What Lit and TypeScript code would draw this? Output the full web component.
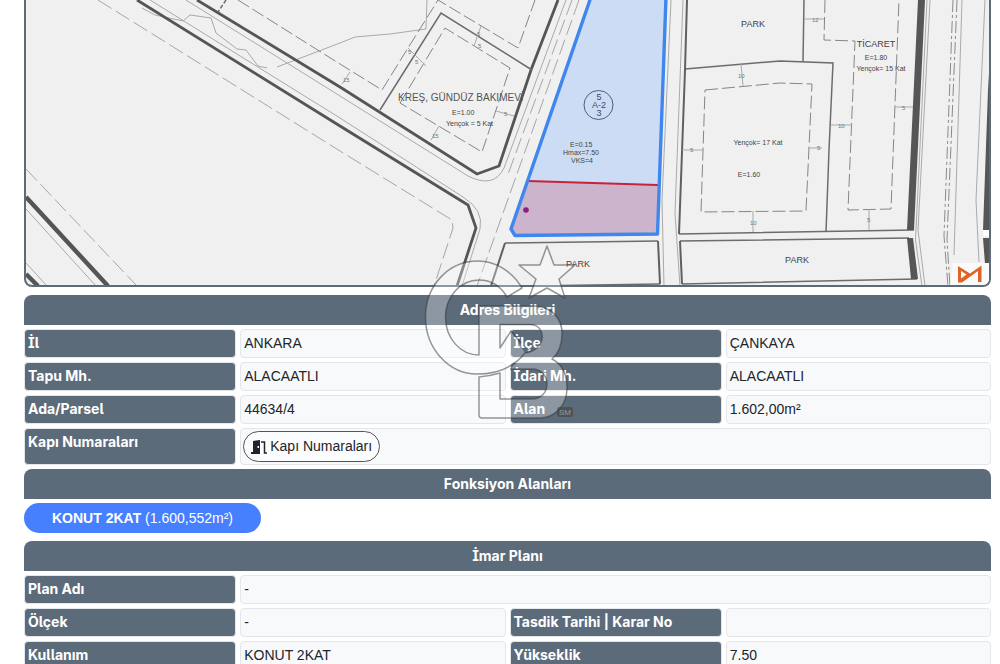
import { LitElement, html, svg, css } from "lit";
import { customElement, property } from "lit/decorators.js";

interface Field {
  label: string;
  value: string;
  wide?: boolean;
  door?: boolean;
}

const address: Field[] = [
  { label: "İl", value: "ANKARA" },
  { label: "İlçe", value: "ÇANKAYA" },
  { label: "Tapu Mh.", value: "ALACAATLI" },
  { label: "İdari Mh.", value: "ALACAATLI" },
  { label: "Ada/Parsel", value: "44634/4" },
  { label: "Alan", value: "1.602,00m²" },
  { label: "Kapı Numaraları", value: "", wide: true, door: true },
];

const plan: Field[] = [
  { label: "Plan Adı", value: "-", wide: true },
  { label: "Ölçek", value: "-" },
  { label: "Tasdik Tarihi | Karar No", value: "" },
  { label: "Kullanım", value: "KONUT 2KAT" },
  { label: "Yükseklik", value: "7.50" },
];

@customElement("parcel-map")
export class ParcelMap extends LitElement {
  static styles = css`
    :host {
      display: block;
      border: 2px solid #5c6b7a;
      border-top: 0;
      border-radius: 0 0 8px 8px;
      overflow: hidden;
      background: #f0f0f0;
    }
    svg {
      display: block;
      width: 100%;
      height: auto;
      font-family: "Liberation Sans", Arial, sans-serif;
    }
    .line { fill: none; stroke: #a9a9a9; stroke-width: 1; }
    .edge { fill: none; stroke: #6c6c6c; stroke-width: 1.5; }
    .thick { fill: none; stroke: #555; stroke-width: 2.8; }
    .wall { fill: none; stroke: #606060; stroke-width: 2; }
    .heavy { fill: none; stroke: #555; stroke-width: 4.4; }
    .dash { fill: none; stroke: #a6a6a6; stroke-width: 1; stroke-dasharray: 16 5; }
    .setback { fill: none; stroke: #858585; stroke-width: 1; stroke-dasharray: 13 4; }
    .lane { fill: none; stroke: #8a8a8a; stroke-width: 1; stroke-dasharray: 12 3 3 3; }
    .solid { fill: #565656; }
    .title { font-size: 10px; fill: #555; }
    .name { font-size: 9px; fill: #444; }
    .note { font-size: 7px; fill: #444; }
    .mark { font-size: 9px; fill: #3c4a60; }
    .dim { font-size: 6px; fill: #777; }
  `;

  render() {
    return html`
      <svg viewBox="26 0 963 285" role="img" aria-label="İmar planı haritası">
        ${svg`
        <path class="dash" d="M98 0L340 151L452 220L453 228L434 286M26 169L137 286"/>
        <path class="line" d="M150 0L340 118L463 197Q484 210 480 229L462 286"/>
        <path class="line" d="M186 0L340 96L468 176Q494 189 504 168L563 8L566 0"/>
        <path class="dash" d="M579 0L477 286M572 0L507 177"/>
        <path class="line" d="M142 8L155 15L183 21L190 15L211 18L216 33L237 49L246 50L258 66L267 68M277 67L340 43L355 37L390 34L426 29L427 0"/>
        <path class="line" d="M26 209L96 286M26 263L47 286"/>
        <path class="thick" d="M137 0L340 126L468 205L476 228L457 286"/>
        <path class="thick" d="M197 0L340 87L477 174L499 166L531 70L558 0"/>
        <path class="heavy" d="M26 197L108 286M26 274L38 286"/>
        <path class="edge" stroke-dasharray="4 2" d="M226 0L218 12"/>
        <path class="setback" d="M238 0L340 64L382 90L408 48L438 0L518 48L535 0"/>
        <path class="edge" d="M380 110L441 13L532 70"/>
        <path class="setback" d="M400 103L445 28L510 68L482 152L400 103"/>
        <path class="line" d="M408 48L426 66M481 26L474 46M350 72L342 84M439 126L431 140M496 111L514 116"/>
        <text class="title" x="398" y="101">KREŞ, GÜNDÜZ BAKIMEVİ</text>
        <text class="note" x="452" y="115">E=1.00</text>
        <text class="note" x="446" y="126">Yençok = 5 Kat</text>
        <text class="dim" x="343" y="82">15</text>
        <text class="dim" x="432" y="138">15</text>
        <text class="dim" x="504" y="116">5</text>
        <text class="dim" x="477" y="36">5</text>
        <text class="dim" x="478" y="48">5</text>
        <text class="dim" x="408" y="54">5</text>
        <text class="dim" x="415" y="64">5</text>

        <path fill="#cddcf5" d="M592 0H666L658 185L528 181Z"/>
        <path fill="#cbb4cc" d="M528 181L658 185V234L515 235L510 230Z"/>
        <path d="M528 181L658 185" stroke="#c9203b" stroke-width="2"/>
        <path d="M591 -3L511 229L515 235.500L657.500 234L666 -3" fill="none" stroke="#3f86ee" stroke-width="3.4" stroke-linejoin="round"/>
        <circle cx="526" cy="210" r="2.800" fill="#8a1f82"/>
        <circle cx="598.500" cy="105" r="14.500" fill="none" stroke="#4c5f7c"/>
        <g class="mark" text-anchor="middle">
          <text x="599" y="100">5</text>
          <text x="599" y="108">A-2</text>
          <text x="599" y="116">3</text>
        </g>
        <text class="note" x="570" y="147">E=0.15</text>
        <text class="note" x="563" y="155">Hmax=7.50</text>
        <text class="note" x="571" y="163">VKS=4</text>

        <path class="line" d="M671 0L662 200L664 286M683 0L675 213L680 286"/>
        <path class="edge" d="M804 0L803 62"/>
        <path class="edge" d="M685 69L780 61L833 63L829 150L826 232M679 234L914 230"/>
        <path class="wall" d="M687 0L685 70L679 234"/>
        <path class="edge" d="M505 243L658 241M660 284L560 285.500M680 241L909 238M682 284L917 279"/>
        <path class="wall" d="M491 286L505 243M680 241L682 284M658 241L660 284"/>
        <path class="solid" d="M918 0H925L914 230H907ZM907 238H913L918 279H911Z"/>
        <path class="setback" d="M705 90L780 83L812 84L806 211L701 212ZM825 0L824 40L855 41L848 210L891 209L899 0"/>
        <path class="line" d="M741 64L743 86M682 150H703M808 148H822M831 125H852M895 107H913M753 211V232M869 209V230M804 19H824"/>
        <path class="line" d="M930 0L918 230L925 286M927 0L915.500 240L922 286M962 0L954 255M985 0L976 200L979 262"/>
        <path class="lane" d="M957 0L947 240L950 286M953 0L944 236L948 286"/>
        <path class="solid" d="M988 90L991 40V230H983ZM983 238H991V264H985Z"/>
        <path d="M983 230H990V236H983Z" fill="#fff"/>
        <g text-anchor="middle">
          <text class="name" x="753" y="27">PARK</text>
          <text class="name" x="578" y="267">PARK</text>
          <text class="name" x="797" y="263">PARK</text>
          <text class="name" x="876" y="47">TİCARET</text>
          <text class="note" x="876" y="60">E=1.80</text>
          <text class="note" x="881" y="71">Yençok= 15 Kat</text>
          <text class="note" x="758" y="145">Yençok= 17 Kat</text>
          <text class="note" x="749" y="177">E=1.60</text>
        </g>
        <g class="dim">
          <text x="738" y="78">10</text><text x="690" y="152">5</text>
          <text x="817" y="150">5</text><text x="838" y="128">10</text>
          <text x="902" y="110">5</text><text x="750" y="225">10</text>
          <text x="867" y="222">5</text><text x="812" y="22">12</text>
        </g>
        <path d="M950 286L953 263H990V286Z" fill="#fafafa"/>
        <path fill="#de6328" d="M958 266L970 273.500L981.500 265.500V282H978V271L962 282.500H958ZM961 271V278.500L966.500 274.500Z"/>
        `}
      </svg>
    `;
  }
}

@customElement("info-grid")
export class InfoGrid extends LitElement {
  @property({ attribute: false }) fields: Field[] = [];

  static styles = css`
    :host { display: block; }
    dl {
      display: grid;
      grid-template-columns: 4fr 5fr 4fr 5fr;
      gap: 4px;
      margin: 0;
    }
    dt, dd {
      box-sizing: border-box;
      margin: 0;
      min-height: 29px;
      padding: 3px;
      line-height: 21px;
      border: 1px solid #e3e6ea;
      border-radius: 4px;
      font-size: 14px;
    }
    dt {
      padding-top: 2px;
      background: #5c6b7a;
      color: #fff;
      font-family: Inter, "Noto Sans", sans-serif;
      font-weight: 700;
      font-feature-settings: "cv05", "cv08";
    }
    dd { background: #f8f9fb; color: #212529; }
    .wide { grid-column: span 3; }
    .action { padding: 2px; }
    button {
      display: flex;
      align-items: center;
      gap: 3px;
      box-sizing: border-box;
      height: 31px;
      padding: 0 7px;
      border: 1px solid #555;
      border-radius: 16px;
      background: #fbfcfd;
      color: #212529;
      font: inherit;
    }
    .door { width: 16px; height: 16px; }
  `;

  render() {
    return html`<dl>
      ${this.fields.map(
        (f) => html`
          <dt>${f.label}</dt>
          <dd class="${f.wide ? "wide" : ""} ${f.door ? "action" : ""}">
            ${f.door
              ? html`<button type="button">
                  <svg class="door" viewBox="0 0 16 16" aria-hidden="true">
                    <path fill="#212529" fill-rule="evenodd" d="M2 2L9 1V15H0V13H2ZM6.500 7V9H8V7Z" />
                    <path fill="none" stroke="#212529" stroke-width="1.500" d="M10 3H13.500V14H16" />
                  </svg>
                  Kapı Numaraları
                </button>`
              : f.value}
          </dd>
        `
      )}
    </dl>`;
  }
}

@customElement("app-root")
export class AppRoot extends LitElement {
  static styles = css`
    :host {
      display: block;
      position: relative;
      box-sizing: border-box;
      height: 100vh;
      overflow: hidden;
      padding: 0 9px 0 24px;
      background: #fff;
      font-family: "Liberation Sans", Arial, sans-serif;
      font-size: 14px;
    }
    .page { display: flex; flex-direction: column; gap: 8px; }
    .section, .sections { display: flex; flex-direction: column; gap: 4px; }
    h2 {
      margin: 0;
      border-radius: 8px 8px 0 0;
      background: #5c6b7a;
      color: #fff;
      font: 700 14px/30px Inter, "Noto Sans", sans-serif;
      font-feature-settings: "cv05", "cv08";
      text-align: center;
    }
    .pill {
      align-self: flex-start;
      height: 30px;
      padding: 0 28px;
      border: 0;
      border-radius: 15px;
      background: #4680ff;
      color: #fff;
      font: 14px/30px "Liberation Sans", Arial, sans-serif;
    }
    .watermark {
      position: absolute;
      left: 420px;
      top: 240px;
      width: 160px;
      height: 184px;
      pointer-events: none;
    }
    .glass { fill: rgba(255, 255, 255, 0.3); }
    .outline {
      fill: none;
      stroke: rgba(50, 50, 50, 0.5);
      stroke-width: 1.5;
      stroke-linejoin: round;
    }
    .badge { fill: rgba(60, 60, 60, 0.5); }
    .sm { font: 8px "Liberation Sans", Arial, sans-serif; fill: #999; }
  `;

  render() {
    return html`
      <main class="page">
        <parcel-map></parcel-map>
        <div class="sections">
          <section class="section">
            <h2>Adres Bilgileri</h2>
            <info-grid .fields=${address}></info-grid>
          </section>
          <section class="section">
            <h2>Fonksiyon Alanları</h2>
            <button class="pill" type="button"><b>KONUT 2KAT</b> (1.600,552m²)</button>
          </section>
        </div>
        <section class="section">
          <h2>İmar Planı</h2>
          <info-grid .fields=${plan}></info-grid>
        </section>
      </main>
      <svg class="watermark" viewBox="420 240 160 184" aria-hidden="true">
        <g class="glass">
          <path d="M522 288C512 271 495 261 478 261C448 261 425.500 286 425.500 317C425.500 349 449 374 477 374C495 374 513 368 525 353L511 331L500 348L479 355C460 355 445.500 338 445.500 317C445.500 297 460 280 479 280C490 280 500 285 507 297Z" />
          <path d="M479 306H535C552 307 562 319 562 333C562 345 558 354 552 359L525 353C546 351 548 325 530 324.500H500V348L479 355Z" />
          <path d="M552 359C562 364 567 375 567 388C567 405 555 418 540 418H482Q479 418 479 415V377Q490 376 500 373V399H532C552 399 552 369 532 369H510Q519 361 525 353Z" />
        </g>
        <path class="outline" d="M507 297L522 288C512 271 495 261 478 261C448 261 425.500 286 425.500 317C425.500 349 449 374 477 374C495 374 513 368 525 353C546 351 548 325 530 324.500H500V348L511 331L521 343" />
        <path class="outline" d="M507 297C500 285 490 280 479 280C460 280 445.500 297 445.500 317C445.500 338 460 355 479 355V306H535C552 307 562 319 562 333C562 345 558 354 552 359C562 364 567 375 567 388C567 405 555 418 540 418H482Q479 418 479 415V377Q490 376 500 373V399H532C552 399 552 369 532 369H510" />
        <g class="glass"><path d="M547 246L554 265L575 265L559 279L565 298L547 288L529 298L536 279L519 265L540 265Z" /></g>
        <path class="outline" d="M547 246L554 265L575 265L559 279L565 298L547 288L529 298L536 279L519 265L540 265Z" />
        <rect class="badge" x="557" y="407" width="16" height="10" rx="2" />
        <text class="sm" x="559" y="415">SM</text>
      </svg>
    `;
  }
}
